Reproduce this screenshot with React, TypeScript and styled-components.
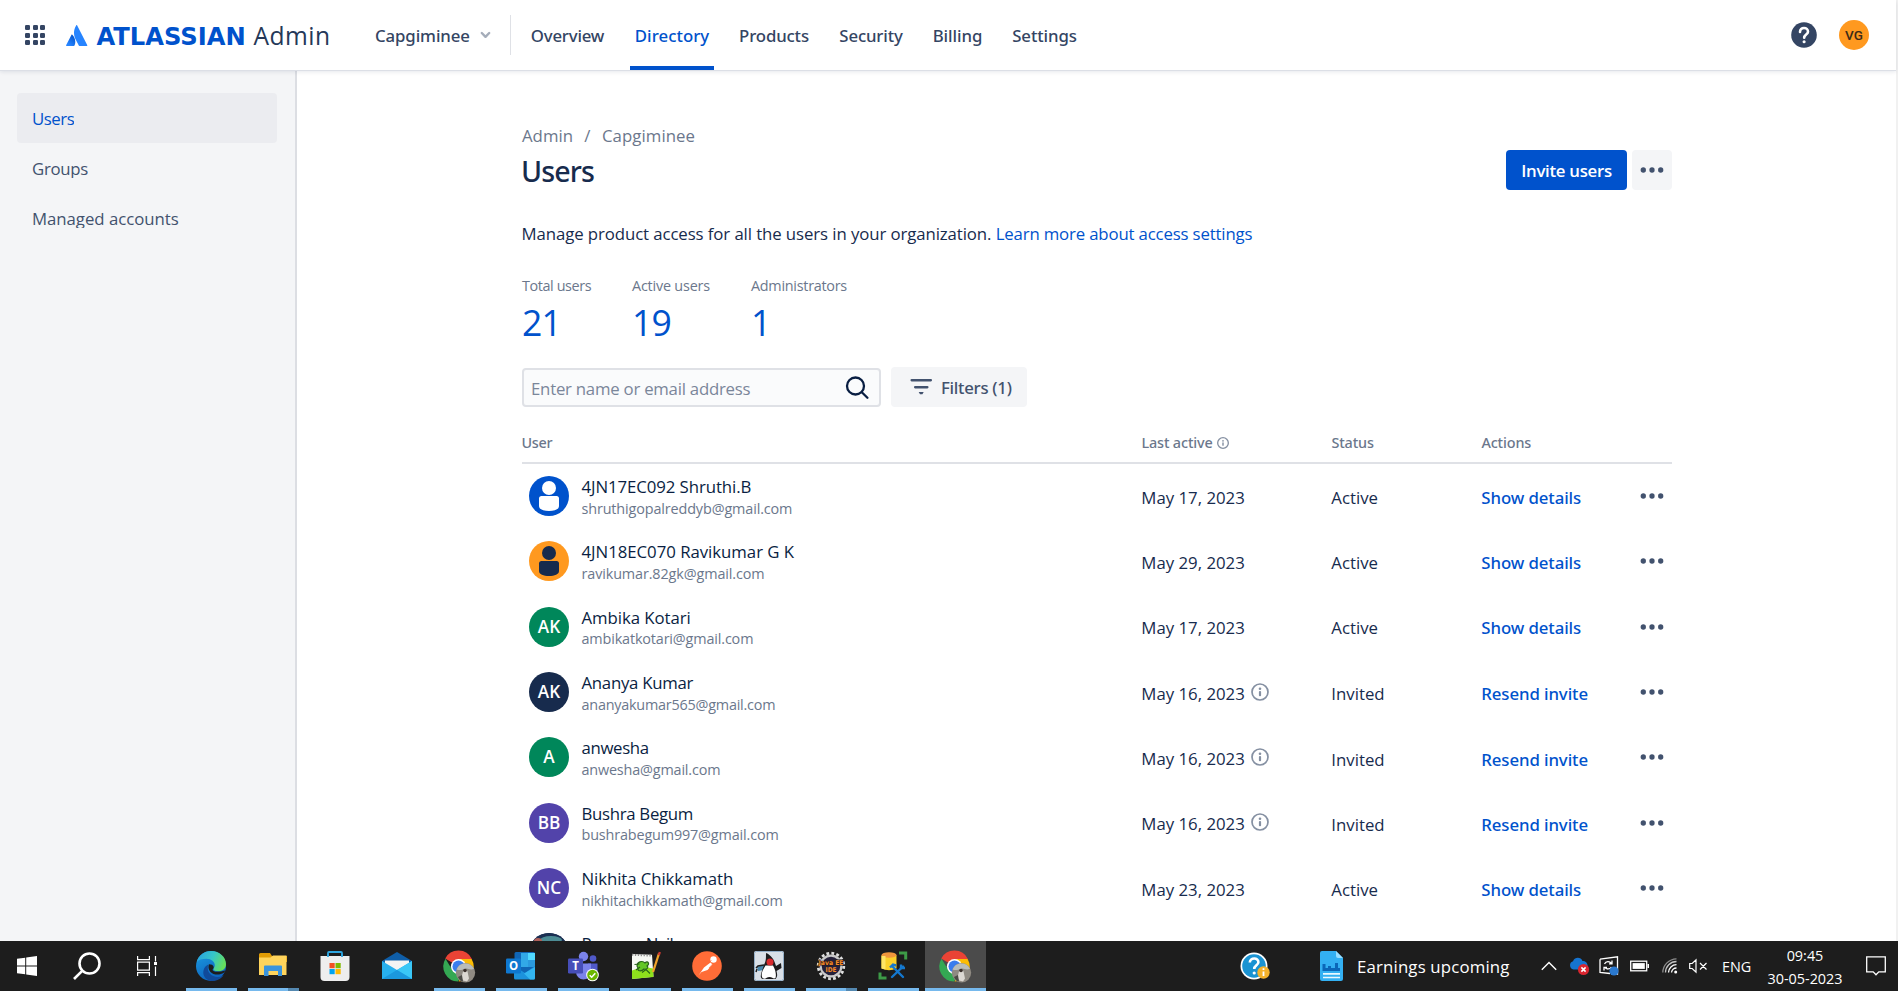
import React from 'react';
import styled, { createGlobalStyle } from 'styled-components';

const GlobalStyle = createGlobalStyle`
  * { box-sizing: border-box; }
  body { margin: 0; background: #fff; overflow: hidden; }
`;

const sans = `'Open Sans', 'Noto Sans', sans-serif`;
const medium = `'Noto Sans', 'Open Sans', sans-serif`;

/* ---------- shell ---------- */
const Screen = styled.div`
  display: flex;
  flex-direction: column;
  width: 1898px;
  height: 991px;
  overflow: hidden;
  font-family: ${sans};
  font-size: 16.8px;
  color: #172b4d;
`;
const Browser = styled.div`
  display: flex;
  flex-direction: column;
  flex: 1;
  min-height: 0;
  border-right: 2px solid #f1f1f1;
`;
const Text = styled.span<{ $ls?: number }>`
  letter-spacing: ${(p) => p.$ls ?? 0}px;
  white-space: nowrap;
`;

/* ---------- top bar ---------- */
const TopBar = styled.header`
  display: flex;
  align-items: center;
  flex: none;
  height: 70px;
  padding: 0 27px 0 25px;
  background: #fff;
  position: relative;
  z-index: 1;
  box-shadow: 0 1px 0 #dcdfe6, 0 2px 4px rgba(9, 30, 66, 0.1);
`;
const AppGrid = styled.div`
  display: grid;
  grid-template-columns: repeat(3, 5px);
  grid-auto-rows: 5px;
  gap: 2.5px;
`;
const GridDot = styled.i`
  border-radius: 1.3px;
  background: #344563;
`;
const Brand = styled.div`
  display: flex;
  align-items: center;
  margin-left: 21px;
  width: 309px;
`;
const BrandName = styled.span`
  margin-left: 8.5px;
  padding-top: 3px;
  width: 157px;
  font: bold 24.2px 'DejaVu Sans', sans-serif;
  color: #0052cc;
`;
const BrandProduct = styled.span`
  padding-top: 1px;
  font-size: 24.6px;
  letter-spacing: 0.5px;
  color: #253858;
`;
const OrgPicker = styled.div`
  display: flex;
  align-items: center;
  width: 136px;
  height: 40px;
  gap: 10px;
  border-right: 1px solid #dfe1e6;
  font-family: ${medium};
  font-weight: 500;
  color: #344563;
`;
const Nav = styled.nav`
  display: flex;
  gap: 20px;
  height: 70px;
  margin-left: 14px;
`;
const NavItem = styled.a<{ $w: number; $active?: boolean }>`
  display: flex;
  align-items: center;
  justify-content: center;
  width: ${(p) => p.$w}px;
  padding-top: 4px;
  border-bottom: 4px solid ${(p) => (p.$active ? '#0052cc' : 'transparent')};
  font-family: ${medium};
  font-weight: 500;
  color: ${(p) => (p.$active ? '#0052cc' : '#344563')};
`;
const TopActions = styled.div`
  display: flex;
  align-items: center;
  gap: 22px;
  margin-left: auto;
`;
const Profile = styled.div`
  display: grid;
  place-items: center;
  width: 30px;
  height: 30px;
  border-radius: 50%;
  background: #ff991f;
  color: #3b2a17;
  font: 500 13.5px Roboto, sans-serif;
`;

/* ---------- body ---------- */
const Body = styled.div`
  display: flex;
  flex: 1;
  min-height: 0;
`;
const Sidebar = styled.aside`
  flex: none;
  width: 297px;
  padding: 23px 18px 0 17px;
  background: #f4f5f7;
  border-right: 2px solid #dcdee3;
`;
const SideItem = styled.a<{ $active?: boolean }>`
  display: flex;
  align-items: center;
  height: 50px;
  padding: 0 15px;
  border-radius: 4px;
  background: ${(p) => (p.$active ? '#ebecf0' : 'transparent')};
  color: ${(p) => (p.$active ? '#0052cc' : '#42526e')};
  span { line-height: 21px; height: 20px; overflow: hidden; }
`;
const Main = styled.main`
  width: 1150px;
  margin-left: 225px;
  padding-top: 55px;
`;
const PageHead = styled.div`
  display: flex;
  justify-content: space-between;
  align-items: flex-end;
  height: 65px;
`;
const Titles = styled.div`
  align-self: flex-start;
`;
const Breadcrumbs = styled.div`
  display: flex;
  gap: 11.4px;
  line-height: 21px;
  color: #6b778c;
`;
const Title = styled.h1`
  margin: 7px 0 0 -1px;
  font: 500 28.6px/35px ${medium};
  letter-spacing: -0.9px;
`;
const HeadActions = styled.div`
  display: flex;
  gap: 5px;
`;
const PrimaryButton = styled.button`
  width: 121px;
  height: 40px;
  padding: 0;
  border: 0;
  border-radius: 4px;
  background: #0052cc;
  color: #fff;
  font: 600 16.8px/21px ${sans};
`;
const MoreButton = styled.button<{ $filled?: boolean }>`
  display: grid;
  place-items: center;
  width: 40px;
  height: 40px;
  padding: 0;
  border: 0;
  border-radius: 4px;
  background: ${(p) => (p.$filled ? '#f4f5f7' : 'transparent')};
`;
const Intro = styled.p`
  margin: 31px 0 29px -0.5px;
  line-height: 25px;
`;
const Link = styled.a`
  color: #0052cc;
`;
const Stats = styled.div`
  display: flex;
`;
const Stat = styled.div<{ $w: number }>`
  width: ${(p) => p.$w}px;
`;
const StatLabel = styled.div`
  font-size: 14.4px;
  line-height: 21px;
  color: #6b778c;
`;
const StatValue = styled.div`
  margin-top: 2px;
  font-size: 35.6px;
  line-height: 49px;
  color: #0052cc;
`;
const Controls = styled.div`
  display: flex;
  align-items: flex-end;
  gap: 10px;
  margin-top: 20px;
`;
const SearchField = styled.div`
  display: flex;
  align-items: center;
  justify-content: space-between;
  width: 359px;
  height: 39px;
  padding: 0 10px 0 7px;
  border: 2px solid #dfe1e6;
  border-radius: 4px;
  background: #fafbfc;
  color: #7a869a;
`;
const Placeholder = styled(Text)`
  padding-top: 2px;
`;
const FilterButton = styled.div`
  display: flex;
  align-items: center;
  gap: 7px;
  width: 136px;
  height: 40px;
  padding-left: 19px;
  border-radius: 4px;
  background: #f4f5f7;
  color: #42526e;
  font-family: ${medium};
  font-weight: 500;
`;

/* ---------- table ---------- */
const columns = '620px 190px 150px 150px 40px';
const TableHead = styled.div`
  display: grid;
  grid-template-columns: ${columns};
  height: 57px;
  padding-top: 25px;
  border-bottom: 2px solid #dfe1e6;
  font: 500 14.4px/21px ${medium};
  color: #6b778c;
`;
const HeadCell = styled.div`
  display: flex;
  align-items: center;
  gap: 4px;
  height: 21px;
  margin-left: -0.6px;
`;
const Row = styled.div`
  display: grid;
  grid-template-columns: ${columns};
  height: 65.3px;
  padding-top: 12.1px;
`;
const UserCell = styled.div`
  display: flex;
  padding-left: 7px;
  gap: 12.5px;
`;
const Avatar = styled.div<{ $bg: string }>`
  display: grid;
  place-items: center;
  width: 40px;
  height: 40px;
  border-radius: 50%;
  background: ${(p) => p.$bg};
  overflow: hidden;
  color: #fff;
  font: 600 17.2px/40px ${sans};
`;
const Name = styled.div`
  line-height: 21px;
  color: #091e42;
`;
const Email = styled.div`
  margin-top: 0.8px;
  font-size: 14.4px;
  line-height: 21px;
  color: #6b778c;
`;
const Cell = styled.div<{ $drop?: boolean }>`
  display: flex;
  gap: 6.4px;
  height: 21px;
  margin-top: ${(p) => (p.$drop ? 11.4 : 10.8)}px;
  margin-left: -0.7px;
  line-height: 21px;
`;
const ActionLink = styled(Cell)`
  font-family: ${medium};
  font-weight: 500;
  color: #0052cc;
`;

/* ---------- taskbar ---------- */
const Taskbar = styled.footer`
  display: flex;
  flex: none;
  height: 50px;
  background: #1d1d1d;
  color: #fff;
`;
const SystemButton = styled.div<{ $w: number }>`
  display: grid;
  place-items: center;
  width: ${(p) => p.$w}px;
  height: 50px;
`;
const AppList = styled.div`
  display: flex;
  gap: 1px;
  margin-left: 7px;
`;
const AppButton = styled.div<{ $state?: 'open' | 'stack' | 'active' }>`
  display: flex;
  flex-direction: column;
  align-items: center;
  width: 61px;
  height: 50px;
  background: ${(p) => (p.$state === 'active' ? '#4b4b4b' : 'transparent')};
  svg { display: block; margin: 9px 1px 5px 0; overflow: visible; }
  &::after {
    content: '';
    width: ${(p) => (p.$state === 'active' ? 61 : 51)}px;
    height: 3px;
    background: ${(p) =>
      !p.$state
        ? 'transparent'
        : p.$state === 'stack'
        ? 'linear-gradient(90deg, #76b9ed 40px, #5488b0 40px)'
        : '#76b9ed'};
  }
`;
const Tray = styled.div`
  display: grid;
  grid-template-columns: 80px 37px 184px 28px 30px 31px 32px 27px 33px 35px 96px 45px;
  align-items: center;
  height: 50px;
  margin-left: auto;
  svg { display: block; overflow: visible; }
`;
const Clock = styled.div`
  display: flex;
  flex-direction: column;
  align-items: center;
  font-size: 14.4px;
  line-height: 23px;
  padding-top: 1px;
`;
const Language = styled.div`
  font-size: 14.4px;
`;
const NotificationSlot = styled.div`
  display: grid;
  place-items: center;
`;

/* ---------- icons ---------- */
const Dots = () => (
  <svg width="24" height="6" viewBox="0 0 24 6" fill="#42526e">
    <circle cx="3.3" cy="3" r="2.65" /><circle cx="12" cy="3" r="2.65" /><circle cx="20.7" cy="3" r="2.65" />
  </svg>
);
const Info = ({ size = 18 }: { size?: number }) => (
  <svg width={size} height={size} viewBox="0 0 18 18" fill="none">
    <circle cx="9" cy="9" r="8" stroke="#8590a2" strokeWidth={size > 15 ? 1.7 : 2} />
    <circle cx="9" cy="5.7" r="1.3" fill="#8590a2" />
    <rect x="7.900" y="8" width="2.200" height="5.200" rx="1" fill="#8590a2" />
  </svg>
);
const Person = ({ color }: { color: string }) => (
  <svg width="40" height="40" viewBox="0 0 40 40" fill={color}>
    <circle cx="20" cy="12" r="7" />
    <path d="M10 22.5a2.5 2.5 0 0 1 2.5-2.5h15a2.5 2.5 0 0 1 2.5 2.5V30c0 3.5-4.5 5-10 5s-10-1.500-10-5z" />
  </svg>
);
const Photo = () => (
  <svg width="40" height="40" viewBox="0 0 40 40">
    <rect width="40" height="40" fill="#1b2f52" />
    <ellipse cx="22" cy="7" rx="11" ry="4" fill="#4d8c94" />
    <ellipse cx="9" cy="8" rx="4" ry="3" fill="#b0605a" />
  </svg>
);
const Chrome = () => (
  <svg width="32" height="33" viewBox="0 -1 32 33">
    <path d="M15.500 15.500L2.200 7.500A15 15 0 0 1 28.900 8z" fill="#ea4335" />
    <path d="M15.500 8H28.600A15 15 0 0 1 15.500 30.500l7-11z" fill="#fbbc04" />
    <path d="M2.500 7.700A15 15 0 0 0 15 30.500l6.500-11-12-.2z" fill="#34a853" />
    <circle cx="15.500" cy="15.500" r="7.600" fill="#fff" />
    <circle cx="15.500" cy="15.500" r="6" fill="#3b7ded" />
    <circle cx="22.500" cy="21.800" r="9.700" fill="#8f8a82" />
    <path d="M13.500 18.500a9.700 9.700 0 0 1 17.500-.8c-4 2-6-1-9 0s-5 2-8.500.8z" fill="#b9bdba" />
    <path d="M20 20.500c1-2.500 4-2.500 4.500 0l1.500 7-2 3-4-1-1.500-3z" fill="#dcd8d2" />
    <circle cx="22" cy="19.500" r="1.800" fill="#3a302b" />
    <path d="M15 26l4-2 1 6.500c-2 0-4-2-5-4.500z" fill="#4b4a45" />
  </svg>
);

/* ---------- data ---------- */
type User = {
  name: string; nls: number; email: string; els: number; bg: string;
  initials?: string; icon?: string; date: string; status: string;
};
const users: User[] = [
  { name: '4JN17EC092 Shruthi.B', nls: -0.08, email: 'shruthigopalreddyb@gmail.com', els: -0.13, bg: '#0052cc', icon: '#fff', date: 'May 17, 2023', status: 'Active' },
  { name: '4JN18EC070 Ravikumar G K', nls: -0.03, email: 'ravikumar.82gk@gmail.com', els: -0.12, bg: '#ff991f', icon: '#172b4d', date: 'May 29, 2023', status: 'Active' },
  { name: 'Ambika Kotari', nls: -0.06, email: 'ambikatkotari@gmail.com', els: -0.15, bg: '#00875a', initials: 'AK', date: 'May 17, 2023', status: 'Active' },
  { name: 'Ananya Kumar', nls: -0.28, email: 'ananyakumar565@gmail.com', els: -0.22, bg: '#172b4d', initials: 'AK', date: 'May 16, 2023', status: 'Invited' },
  { name: 'anwesha', nls: -0.34, email: 'anwesha@gmail.com', els: -0.17, bg: '#00875a', initials: 'A', date: 'May 16, 2023', status: 'Invited' },
  { name: 'Bushra Begum', nls: -0.3, email: 'bushrabegum997@gmail.com', els: -0.15, bg: '#5243aa', initials: 'BB', date: 'May 16, 2023', status: 'Invited' },
  { name: 'Nikhita Chikkamath', nls: -0.08, email: 'nikhitachikkamath@gmail.com', els: -0.15, bg: '#5243aa', initials: 'NC', date: 'May 23, 2023', status: 'Active' },
];
const nav = [
  { label: 'Overview', w: 85, ls: -0.2 },
  { label: 'Directory', w: 84, ls: 0.05, active: true },
  { label: 'Products', w: 80, ls: -0.15 },
  { label: 'Security', w: 74, ls: -0.15 },
  { label: 'Billing', w: 59, ls: -0.05 },
  { label: 'Settings', w: 75, ls: -0.1 },
];

export default function App() {
  return (
    <Screen>
      <GlobalStyle />
      <Browser>
        <TopBar>
          <AppGrid>{Array.from({ length: 9 }, (_, i) => <GridDot key={i} />)}</AppGrid>
          <Brand>
            <svg width="22" height="21" viewBox="0 0 22 21">
              <defs>
                <linearGradient id="peak" x1="0.9" y1="0.1" x2="0.3" y2="1">
                  <stop offset="0" stopColor="#0052cc" /><stop offset="0.9" stopColor="#2684ff" />
                </linearGradient>
              </defs>
              <path d="M6.300 9.800c-.3-.4-.7-.3-.9.100L.1 20.200c-.2.400 0 .8.500.8h7.300c.3 0 .5-.1.600-.4 1.700-3.400.6-8.100-2.200-10.800z" fill="url(#peak)" />
              <path d="M10.200.4C7.300 5 7.500 10 9.400 13.900l3.400 6.700c.1.300.4.400.600.400h7.400c.5 0 .7-.4.5-.8L11.200.4c-.2-.5-.7-.5-1 0z" fill="#2684ff" />
            </svg>
            <BrandName>ATLASSIAN</BrandName>
            <BrandProduct>Admin</BrandProduct>
          </Brand>
          <OrgPicker>
            <Text $ls={-0.1}>Capgiminee</Text>
            <svg width="11" height="8" viewBox="0 0 11 8" fill="none" stroke="#a5adba" strokeWidth="2.4" strokeLinecap="round" strokeLinejoin="round">
              <path d="M1.800 2l3.700 3.800L9.200 2" />
            </svg>
          </OrgPicker>
          <Nav>
            {nav.map((n) => (
              <NavItem key={n.label} $w={n.w} $active={n.active}><Text $ls={n.ls}>{n.label}</Text></NavItem>
            ))}
          </Nav>
          <TopActions>
            <svg width="26" height="26" viewBox="0 0 26 26">
              <circle cx="13" cy="13" r="12.800" fill="#344563" />
              <path d="M9 9.900C9 7.400 10.800 6 13 6s4 1.400 4 3.700c0 2.900-3.800 2.900-3.800 6.100" fill="none" stroke="#fff" strokeWidth="2.600" strokeLinecap="round" />
              <circle cx="13.100" cy="19.700" r="1.550" fill="#fff" />
            </svg>
            <Profile>VG</Profile>
          </TopActions>
        </TopBar>

        <Body>
          <Sidebar>
            <SideItem $active><Text $ls={-0.43}>Users</Text></SideItem>
            <SideItem><Text $ls={-0.3}>Groups</Text></SideItem>
            <SideItem><Text $ls={-0.04}>Managed accounts</Text></SideItem>
          </Sidebar>
          <Main>
            <PageHead>
              <Titles>
                <Breadcrumbs><Text>Admin</Text><Text>/</Text><Text $ls={0.08}>Capgiminee</Text></Breadcrumbs>
                <Title>Users</Title>
              </Titles>
              <HeadActions>
                <PrimaryButton><Text $ls={-0.28}>Invite users</Text></PrimaryButton>
                <MoreButton $filled><Dots /></MoreButton>
              </HeadActions>
            </PageHead>
            <Intro>
              <Text $ls={-0.09}>Manage product access for all the users in your organization. </Text>
              <Link><Text $ls={-0.16}>Learn more about access settings</Text></Link>
            </Intro>
            <Stats>
              <Stat $w={110}><StatLabel><Text $ls={-0.4}>Total users</Text></StatLabel><StatValue><Text $ls={-0.9}>21</Text></StatValue></Stat>
              <Stat $w={119}><StatLabel><Text $ls={-0.2}>Active users</Text></StatLabel><StatValue><Text $ls={-0.9}>19</Text></StatValue></Stat>
              <Stat $w={119}><StatLabel><Text $ls={-0.27}>Administrators</Text></StatLabel><StatValue>1</StatValue></Stat>
            </Stats>
            <Controls>
              <SearchField>
                <Placeholder $ls={-0.24}>Enter name or email address</Placeholder>
                <svg width="24" height="24" viewBox="0 0 24 24" fill="none" stroke="#091e42" strokeWidth="2.300" strokeLinecap="round">
                  <circle cx="10.500" cy="10" r="8.500" /><path d="M16.800 16.200l5.600 5.600" />
                </svg>
              </SearchField>
              <FilterButton>
                <svg width="24" height="18" viewBox="0 0 24 18" fill="#42526e">
                  <rect x="0.500" y="1" width="21.500" height="2.400" rx="1.100" />
                  <rect x="4" y="8" width="14.500" height="2.400" rx="1.100" />
                  <path d="M8.700 14h5l-1.300 2.200h-2.400z" />
                </svg>
                <Text $ls={-0.28}>Filters (1)</Text>
              </FilterButton>
            </Controls>
            <TableHead>
              <HeadCell><Text $ls={-0.3}>User</Text></HeadCell>
              <HeadCell><Text $ls={-0.14}>Last active</Text><Info size={12} /></HeadCell>
              <HeadCell><Text $ls={-0.14}>Status</Text></HeadCell>
              <HeadCell><Text $ls={-0.14}>Actions</Text></HeadCell>
            </TableHead>
            {users.map((u) => {
              const invited = u.status === 'Invited';
              return (
                <Row key={u.email}>
                  <UserCell>
                    <Avatar $bg={u.bg}>{u.icon ? <Person color={u.icon} /> : u.initials}</Avatar>
                    <div>
                      <Name><Text $ls={u.nls}>{u.name}</Text></Name>
                      <Email><Text $ls={u.els}>{u.email}</Text></Email>
                    </div>
                  </UserCell>
                  <Cell><Text>{u.date}</Text>{invited && <Info />}</Cell>
                  <Cell $drop={invited}><Text>{u.status}</Text></Cell>
                  <ActionLink $drop={invited}><Text $ls={-0.09}>{invited ? 'Resend invite' : 'Show details'}</Text></ActionLink>
                  <MoreButton><Dots /></MoreButton>
                </Row>
              );
            })}
            <Row>
              <UserCell>
                <Avatar $bg="#1b2f52"><Photo /></Avatar>
                <Name><Text $ls={-0.8}>Poonam Naik</Text></Name>
              </UserCell>
            </Row>
          </Main>
        </Body>
      </Browser>

      <Taskbar>
        <SystemButton $w={54}>
          <svg width="20" height="20" viewBox="0 0 20 20" fill="#fff">
            <path d="M0 2.800l8.200-1.100v7.800H0zM9.200 1.500L20 0v9.500H9.200zM0 10.500h8.200v7.800L0 17.200zM9.200 10.500H20V20L9.200 18.500z" />
          </svg>
        </SystemButton>
        <SystemButton $w={66}>
          <svg width="28" height="28" viewBox="0 0 28 28" fill="none" stroke="#fff" strokeWidth="2.600">
            <circle cx="16.500" cy="11.500" r="10" /><path d="M9.200 18.800L1 27" />
          </svg>
        </SystemButton>
        <SystemButton $w={54}>
          <svg width="20" height="20" viewBox="0 0 20 20" fill="none" stroke="#fff" strokeWidth="1.200">
            <path d="M.6 0v3.700h11.800V0M.6 20v-3.300h11.800V20M.6 6.200h11.800v8H.6zM18.500 0v5.500M18.500 10.500V20" />
            <rect x="17" y="6" width="3" height="3" fill="#fff" stroke="none" />
          </svg>
        </SystemButton>
        <AppList>
          <AppButton $state="open">
            <svg width="30" height="33" viewBox="0 -1 30 33">
              <defs>
                <linearGradient id="edgeTop" x1="0" y1="0.3" x2="1" y2="0.6">
                  <stop offset="0" stopColor="#2aa5e0" /><stop offset="0.5" stopColor="#36c6c8" /><stop offset="1" stopColor="#6ae054" />
                </linearGradient>
                <linearGradient id="edgeLow" x1="0" y1="0" x2="0.5" y2="1">
                  <stop offset="0" stopColor="#1b9de2" /><stop offset="1" stopColor="#0d62bd" />
                </linearGradient>
              </defs>
              <circle cx="15" cy="15" r="15" fill="url(#edgeLow)" />
              <path d="M.8 11C2.500 4 8.500 0 15 0c8.500 0 15 6 15 13.200 0 4.500-3.800 7-7.700 7-3 0-4.800-1-4.800-2.300 0-1 1.300-1.500 1.300-3.700 0-3.400-3.400-6.400-8.300-6.400C6 7.800 2.500 9 .8 11z" fill="url(#edgeTop)" />
              <path d="M12.400 13.500c-2 4.800.5 11 7 12.300 3.600.7 6.600-.6 8.300-1.600C25 28 20.500 30 15.500 30 9 29 6.500 24 7.500 19.500c.5-2.700 2.600-5 4.900-6z" fill="#104a9a" />
              <path d="M13 13.200c-1.700 4 .8 9.300 6.500 10.300 3.400.5 6.200-.6 8.300-1.800.8-.4 1.300 0 .9.700 -.4.800-.9 1.500-1.500 2.200l2-5-4 1-5.500.2c-2.500-.5-4-1.600-2.500-3 .9-1 1-4.500-4.200-4.600z" fill="#1d1d1d" />
            </svg>
          </AppButton>
          <AppButton $state="stack">
            <svg width="28" height="33" viewBox="0 -3 28 33">
              <path d="M0 1.500Q0 0 1.500 0H11l2 3H28v6H0z" fill="#e19c05" />
              <path d="M0 4.500h11.500L14 2.500h13.500V22H0z" fill="#ffd45c" />
              <path d="M5 23v-9.500q0-1 1-1h16q1 0 1 1V23h-4v-5h-9.500v5z" fill="#3b94dc" />
            </svg>
          </AppButton>
          <AppButton>
            <svg width="30" height="33" viewBox="0 -1 30 33">
              <path d="M8 8V2q0-1 1-1h12q1 0 1 1v6" fill="none" stroke="#2ea6e0" strokeWidth="1.800" />
              <path d="M.5 5h29v21q0 4-4 4h-21q-4 0-4-4z" fill="#eeeeee" />
              <path d="M8 6V3M22 6V3" stroke="#2ea6e0" strokeWidth="1.800" />
              <rect x="9.500" y="12" width="5.200" height="5.200" fill="#f25022" /><rect x="15.500" y="12" width="5.200" height="5.200" fill="#7fba00" />
              <rect x="9.500" y="18" width="5.200" height="5.200" fill="#00a4ef" /><rect x="15.500" y="18" width="5.200" height="5.200" fill="#ffb900" />
            </svg>
          </AppButton>
          <AppButton>
            <svg width="30" height="33" viewBox="0 -2 30 33">
              <path d="M0 9L15 0l15 9v4H0z" fill="#0f5ea8" />
              <path d="M3 8.500h24v10H3z" fill="#f4f4f4" />
              <path d="M0 9l15 9 15-9v18H0z" fill="#27b0ee" />
              <path d="M15 18L30 9v18z" fill="#3ac7f6" /><path d="M0 27L15 18l15 9z" fill="#1b98dd" />
            </svg>
          </AppButton>
          <AppButton $state="open"><Chrome /></AppButton>
          <AppButton $state="open">
            <svg width="30" height="33" viewBox="0 -2 30 33">
              <rect x="8.500" width="20.500" height="26" rx="1.500" fill="#1066b5" />
              <rect x="15" y="1" width="7" height="14" fill="#32a9e7" /><rect x="22" y="1" width="7" height="7" fill="#50d9ff" />
              <rect x="22" y="8" width="7" height="7" fill="#2b9ade" />
              <path d="M8 14l11 7 10-7v12q0 1.500-1.500 1.500h-18Q8 27.500 8 26z" fill="#1c92dc" /><path d="M29 15v11q0 1.500-1.500 1.500H24L18 21.500z" fill="#33b5f0" />
              <rect y="6.500" width="15" height="15" rx="1.200" fill="#0f78d0" />
              <text x="7.500" y="18.200" textAnchor="middle" fontFamily="Open Sans" fontWeight="700" fontSize="11.500" fill="#fff">O</text>
            </svg>
          </AppButton>
          <AppButton $state="open">
            <svg width="31" height="33" viewBox="0 -2 31 33">
              <circle cx="25" cy="6.500" r="3.300" fill="#5059c9" /><circle cx="15.500" cy="4.500" r="4.700" fill="#7b83eb" />
              <path d="M20 11.500h9.500v8a4.800 4.800 0 0 1-9.500 1z" fill="#5059c9" />
              <path d="M8 11.500h15V20a7.500 7.500 0 0 1-15 0z" fill="#7b83eb" />
              <rect y="6.500" width="15" height="15" rx="1.200" fill="#464eb8" />
              <text x="7.500" y="18.200" textAnchor="middle" fontFamily="Open Sans" fontWeight="700" fontSize="11.500" fill="#fff">T</text>
              <circle cx="24.500" cy="23" r="6.300" fill="#fff" /><circle cx="24.500" cy="23" r="5.300" fill="#6bb700" />
              <path d="M21.700 23.200l2 2 3.600-4" fill="none" stroke="#fff" strokeWidth="1.500" />
            </svg>
          </AppButton>
          <AppButton $state="open">
            <svg width="30" height="33" viewBox="0 -2 30 33">
              <path d="M2 2l20 .8 1.500 22L2 27z" fill="#f6f8f3" />
              <path d="M2 18.500q10-5 21-2l.5 8.500L2 27z" fill="#8fe01c" />
              <path d="M2 2.800l20 .8" stroke="#8d8d8d" strokeWidth="2" strokeDasharray="1.300 1.600" />
              <path d="M7 14c0-4 5-6 8-3 3-3 5 1 2 3 2 1 0 4-3 3-3 3-7 2-6-1z" fill="#63c625" stroke="#28631a" strokeWidth="1.100" />
              <path d="M4.500 12.500l5-.5M6 18l4-3M12 20.500l4-3 4 4" fill="none" stroke="#28631a" strokeWidth="1.100" />
              <path d="M29 1.500L23 20" stroke="#f0a229" strokeWidth="2.300" /><path d="M29.800 0l-1 3.200" stroke="#cf3b32" strokeWidth="2.300" />
            </svg>
          </AppButton>
          <AppButton $state="open">
            <svg width="30" height="33" viewBox="0 -1 30 33">
              <circle cx="15" cy="15" r="14.800" fill="#ff6c37" />
              <path d="M6.500 24.500l5.500-8 6.500-5 2 2-5 5.500-6 2z" fill="#fff" />
              <circle cx="21.500" cy="8.500" r="3.200" fill="#fff" /><path d="M13.500 14l6-4.500M17 17l4.500-5" stroke="#ff6c37" strokeWidth="0.700" />
            </svg>
          </AppButton>
          <AppButton $state="open">
            <svg width="30" height="33" viewBox="0 -1 30 33">
              <rect width="30" height="30" rx="2" fill="#d9dfe6" /><rect x=".5" y=".5" width="29" height="29" rx="2" fill="none" stroke="#93aec7" />
              <path d="M3 16l7-2v5l-6 1z" fill="#4787ad" />
              <path d="M10 14c2-4 2-6 2-12 5 2 8 6 10 13l5-3 .5 5-5 3c1 4 1 6-1 8H9c-4-1-2-5 1-14z" fill="#1c1c1e" />
              <path d="M2 17l2-2 6-1M2 21l1-3" fill="none" stroke="#1c1c1e" strokeWidth="1.500" />
              <path d="M11.500 14.500c-3 5-5 9-3 12.500 3 2 4-1 7-1s4 2.500 6 1c1-4 0-8-2.500-12.500z" fill="#fff" />
              <circle cx="16" cy="11" r="3.500" fill="#d92a2e" />
            </svg>
          </AppButton>
          <AppButton $state="stack">
            <svg width="30" height="33" viewBox="0 -1 30 33">
              <circle cx="15" cy="15" r="12.800" fill="none" stroke="#dedede" strokeWidth="2.800" strokeDasharray="2.800 2.227" />
              <circle cx="15" cy="15" r="10.400" fill="#24203a" stroke="#c9c9c9" strokeWidth="2.200" />
              <text x="15" y="14.200" textAnchor="middle" fontFamily="DejaVu Sans" fontWeight="700" fontSize="6.600" textLength="25" lengthAdjust="spacingAndGlyphs" fill="#f78b28" stroke="#241a1a" strokeWidth="1.200" paintOrder="stroke">Java EE</text>
              <text x="15" y="20.500" textAnchor="middle" fontFamily="DejaVu Sans" fontWeight="700" fontSize="6.600" textLength="11" lengthAdjust="spacingAndGlyphs" fill="#f78b28">IDE</text>
            </svg>
          </AppButton>
          <AppButton $state="open">
            <svg width="28" height="33" viewBox="0 -2 28 33">
              <path d="M20 1h6.700v6.500M1 20.500V26h6.500" fill="none" stroke="#3d9b47" strokeWidth="3" />
              <path d="M2.500 3h15v13.500q-7.500 3.500-15 0z" fill="#fbd12b" /><ellipse cx="10" cy="3" rx="7.500" ry="2.800" fill="#f0973c" />
              <path d="M2.500 4h4v13.500l-4-1z" fill="#ffe566" />
              <path d="M13 25l11-10.500M13.500 14.500L24 25" stroke="#1478cf" strokeWidth="2.400" strokeLinecap="round" />
              <path d="M11 15.500l3-3 3 1M22 12.500v3.500h4" fill="none" stroke="#1478cf" strokeWidth="2.400" />
            </svg>
          </AppButton>
          <AppButton $state="active"><Chrome /></AppButton>
        </AppList>
        <Tray>
          <svg width="31" height="29" viewBox="0 0 31 29">
            <circle cx="14" cy="14" r="13.500" fill="#fff" /><circle cx="14" cy="14" r="11.800" fill="#1a93d2" />
            <path d="M9.800 10.500c.2-5.500 8.800-5.200 8.600-.2-.1 3-4.200 3.200-4.200 6.700" fill="none" stroke="#fff" strokeWidth="2.600" /><circle cx="14.200" cy="21" r="1.600" fill="#fff" />
            <circle cx="23.500" cy="20.500" r="6.200" fill="#f5b32c" /><path d="M23.500 19.500v4.500M23.500 16.300v1.700" stroke="#fff" strokeWidth="1.800" />
          </svg>
          <svg width="23" height="30" viewBox="0 0 23 30">
            <path d="M0 2q0-2 2-2h14l7 7v21q0 2-2 2H2q-2 0-2-2z" fill="#33b0f2" /><path d="M16 0l7 7h-5q-2 0-2-2z" fill="#9adfff" />
            <path d="M4 13v5M9.500 15v3M16.500 12v6M2.500 18.500h17.500" stroke="#0b67b8" strokeWidth="3" />
            <path d="M3 22.800h17M3 26.500h17" stroke="#e9f8ff" strokeWidth="1.700" />
          </svg>
          <Text $ls={0.17}>Earnings upcoming</Text>
          <svg width="16" height="10" viewBox="0 0 16 10" fill="none" stroke="#fff" strokeWidth="1.400"><path d="M.8 8.800L8 1.500l7.200 7.300" /></svg>
          <svg width="21" height="18" viewBox="0 0 21 18">
            <path d="M4.500 12.500a4.300 4.300 0 0 1-.5-8.300C6-.5 12 0 13.500 4c3 0 5 2 5 4.500s-2 4-4 4z" fill="#1674d0" />
            <circle cx="14.500" cy="12.500" r="5.600" fill="#d9252f" /><path d="M12.400 10.400l4.200 4.200M16.600 10.400l-4.200 4.200" stroke="#fff" strokeWidth="1.500" />
          </svg>
          <svg width="20" height="20" viewBox="0 0 20 20" fill="none" stroke="#fff" strokeWidth="1.300">
            <path d="M1 3.200L18.500.8V18H12M1 3.200v13.300l10 1" /><path d="M5.500 8c1.500-3 5-3 7-.5M13 4.500v3.300h-3M12.500 11c-1.500 2.500-5 2.700-7 .2M5 14.500v-3.200h3" />
            <circle cx="15" cy="15" r="4.600" fill="#2b79cf" stroke="none" />
          </svg>
          <svg width="20" height="12" viewBox="0 0 20 12"><rect x=".7" y="1.200" width="16" height="9.600" fill="none" stroke="#fff" strokeWidth="1.300" /><rect x="2.600" y="3.100" width="12.200" height="5.800" fill="#fff" /><rect x="17.500" y="4" width="1.500" height="4" fill="#fff" /></svg>
          <svg width="16" height="16" viewBox="0 0 16 16" fill="none" stroke="#fff" strokeWidth="1.300">
            <path d="M9.500 14.500a5 5 0 0 1 5-4.500" /><path d="M6.500 14.500a8 8 0 0 1 8-7.800" /><path d="M3.500 14.500a11 11 0 0 1 11-11" stroke="#c2c2c2" /><path d="M.8 14.500A14 14 0 0 1 14.500.8" stroke="#8d8d8d" /><circle cx="13.700" cy="14" r="1.500" fill="#fff" stroke="none" />
          </svg>
          <svg width="19" height="14" viewBox="0 0 19 14" fill="none" stroke="#fff" strokeWidth="1.200"><path d="M.7 4.500h2.500L7 .9v12.200L3.200 9.500H.7zM11 4l6.500 6.500M17.500 4L11 10.500" /></svg>
          <Language>ENG</Language>
          <Clock><Text>09:45</Text><Text>30-05-2023</Text></Clock>
          <NotificationSlot>
            <svg width="20" height="20" viewBox="0 0 20 20" fill="none" stroke="#fff" strokeWidth="1.300"><path d="M.7.8h18.600v15h-6.500l-2.800 3-2.800-3H.7z" /></svg>
          </NotificationSlot>
        </Tray>
      </Taskbar>
    </Screen>
  );
}
